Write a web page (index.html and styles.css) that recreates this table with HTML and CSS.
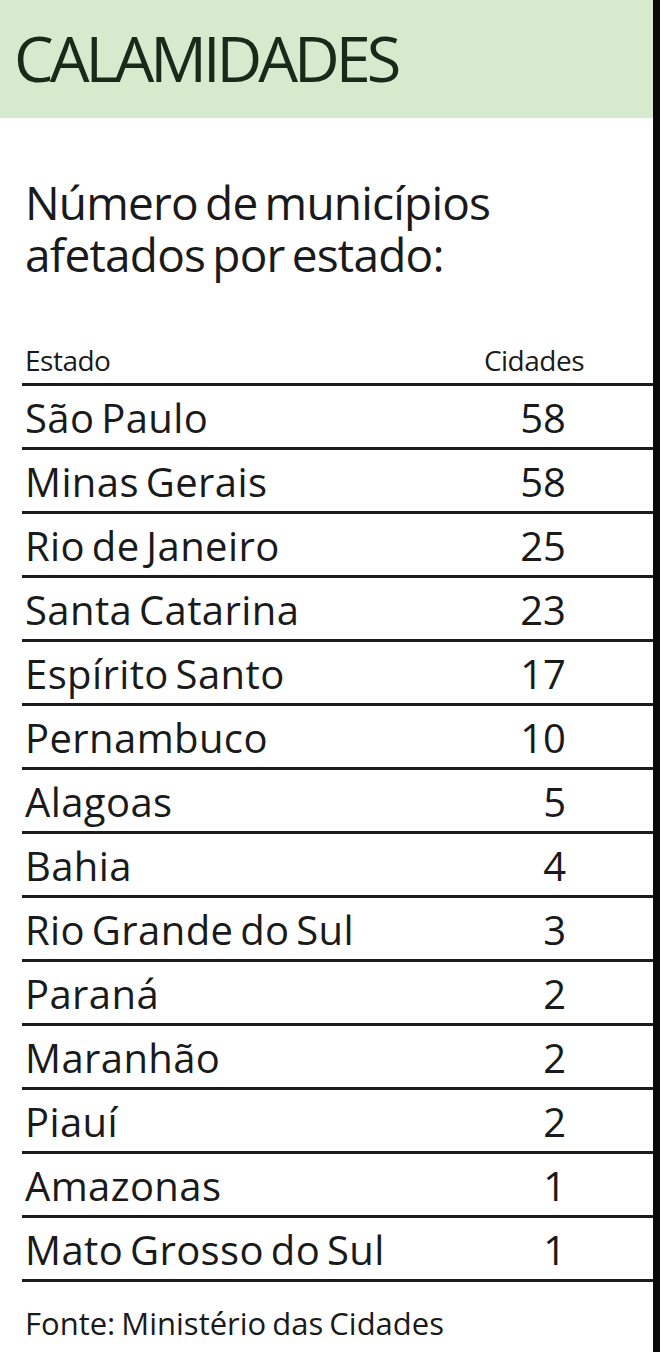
FILE: index.html
```html
<!DOCTYPE html>
<html lang="pt-BR">
<head>
<meta charset="utf-8">
<title>Calamidades</title>
<link rel="stylesheet" href="styles.css">
</head>
<body>
<div class="page">
  <header class="band">
    <h1 class="title">CALAMIDADES</h1>
  </header>
  <p class="subtitle">Número de municípios<br>afetados por estado:</p>
  <div class="table">
    <div class="row head"><span class="name">Estado</span><span class="num">Cidades</span></div>
    <div class="row"><span class="name">São Paulo</span><span class="num">58</span></div>
    <div class="row"><span class="name">Minas Gerais</span><span class="num">58</span></div>
    <div class="row"><span class="name">Rio de Janeiro</span><span class="num">25</span></div>
    <div class="row"><span class="name">Santa Catarina</span><span class="num">23</span></div>
    <div class="row"><span class="name">Espírito Santo</span><span class="num">17</span></div>
    <div class="row"><span class="name">Pernambuco</span><span class="num">10</span></div>
    <div class="row"><span class="name">Alagoas</span><span class="num">5</span></div>
    <div class="row"><span class="name">Bahia</span><span class="num">4</span></div>
    <div class="row"><span class="name">Rio Grande do Sul</span><span class="num">3</span></div>
    <div class="row"><span class="name">Paraná</span><span class="num">2</span></div>
    <div class="row"><span class="name">Maranhão</span><span class="num">2</span></div>
    <div class="row"><span class="name">Piauí</span><span class="num">2</span></div>
    <div class="row"><span class="name">Amazonas</span><span class="num">1</span></div>
    <div class="row"><span class="name">Mato Grosso do Sul</span><span class="num">1</span></div>
  </div>
  <p class="source">Fonte: Ministério das Cidades</p>
</div>
</body>
</html>
```

FILE: styles.css
```css
html, body {
  margin: 0;
  padding: 0;
  background: #ffffff;
}

.page {
  box-sizing: border-box;
  width: 660px;
  height: 1352px;
  border-right: 7px solid #0a0a0a;
  font-family: "Open Sans", "Noto Sans", sans-serif;
  color: #1a1a1a;
  overflow: hidden;
}

.band {
  box-sizing: border-box;
  height: 118px;
  background: #d6ebcd;
  padding: 15px 0 0 14px;
}

.title {
  margin: 0;
  font-size: 63px;
  font-weight: 400;
  line-height: 86px;
  letter-spacing: -4px;
  color: #1a2a1a;
}

.subtitle {
  margin: 58px 0 0 25px;
  font-size: 46px;
  line-height: 52px;
  letter-spacing: -0.8px;
  word-spacing: -4px;
}

.table {
  margin: 54px 0 0 22px;
}

.row {
  display: flex;
  justify-content: space-between;
  align-items: baseline;
  box-sizing: border-box;
  height: 64px;
  border-bottom: 3px solid #1c1c1c;
  padding-left: 3px;
  padding-top: 2px;
  font-size: 40px;
  line-height: 59px;
  letter-spacing: 0.4px;
  word-spacing: -4px;
}

.row .num {
  padding-right: 87px;
  letter-spacing: 0;
}

.row.head {
  height: 52px;
  padding-top: 4px;
  font-size: 28px;
  line-height: 45px;
  letter-spacing: -0.5px;
  word-spacing: 0;
}

.row.head .num {
  padding-right: 69px;
  letter-spacing: -0.5px;
}

.source {
  margin: 22px 0 0 25px;
  font-size: 31px;
  line-height: 38px;
  letter-spacing: 0;
  word-spacing: -2px;
}
```
